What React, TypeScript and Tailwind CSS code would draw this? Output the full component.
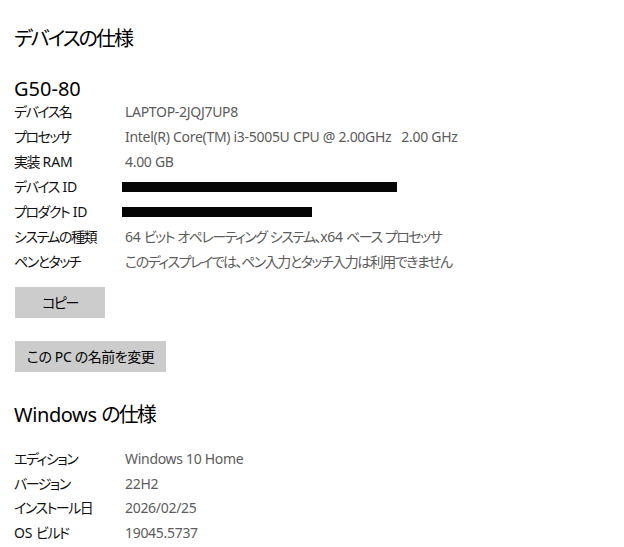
import React from "react";

type Row = { label: string; value?: string; redact?: number };

const deviceRows: Row[] = [
  { label: "デバイス名", value: "LAPTOP-2JQJ7UP8" },
  { label: "プロセッサ", value: "Intel(R) Core(TM) i3-5005U CPU @ 2.00GHz\u00a0\u00a0 2.00 GHz" },
  { label: "実装 RAM", value: "4.00 GB" },
  { label: "デバイス ID", redact: 275 },
  { label: "プロダクト ID", redact: 190 },
  { label: "システムの種類", value: "64 ビット オペレーティング システム、x64 ベース プロセッサ" },
  { label: "ペンとタッチ", value: "このディスプレイでは、ペン入力とタッチ入力は利用できません" },
];

const windowsRows: Row[] = [
  { label: "エディション", value: "Windows 10 Home" },
  { label: "バージョン", value: "22H2" },
  { label: "インストール日", value: "2026/02/25" },
  { label: "OS ビルド", value: "19045.5737" },
];

const CJK = /([\u3000-\u30ff\u4e00-\u9fff\uff00-\uffef]+)/;

// Japanese runs are set tighter than Latin runs, like a UI font with narrow kana.
function Mixed({ text, cjk, latin }: { text: string; cjk: string; latin: string }) {
  return (
    <>
      {text.split(CJK).map((part, i) =>
        part === "" ? null : (
          <span key={i} className={CJK.test(part) ? cjk : latin}>
            {part}
          </span>
        )
      )}
    </>
  );
}

function SpecRow({ row, h }: { row: Row; h: string }) {
  return (
    <div className={`flex items-center ${h}`}>
      <div className="w-[111px] shrink-0 text-[14px] text-[#111] whitespace-pre">
        <Mixed text={row.label} cjk="tracking-[-1.5px]" latin="tracking-[-0.1px]" />
      </div>
      {row.redact ? (
        <div className="-ml-[3px] h-[10px] bg-[#050505]" style={{ width: row.redact }} />
      ) : (
        <div className="text-[14px] text-[#5c5c5c] whitespace-pre">
          <Mixed text={row.value ?? ""} cjk="tracking-[-1.5px]" latin="tracking-[-0.3px]" />
        </div>
      )}
    </div>
  );
}

function Heading({ text, className }: { text: string; className: string }) {
  return (
    <h2 className={`h-[28px] leading-[28px] text-[20px] font-normal whitespace-pre ${className}`}>
      <Mixed text={text} cjk="tracking-[-2px]" latin="tracking-[-0.4px]" />
    </h2>
  );
}

export default function App() {
  return (
    <div
      className="w-[624px] h-[547px] bg-white pl-[14px] overflow-hidden [font-feature-settings:'palt'] text-black"
      style={{ fontFamily: '"Noto Sans", "Noto Sans CJK JP", sans-serif' }}
    >
      <Heading text="デバイスの仕様" className="mt-[25px]" />
      <h2 className="mt-[25px] h-[21px] leading-[21px] text-[20px] font-normal">G50-80</h2>
      <div className="flex flex-col">
        {deviceRows.map((r) => (
          <SpecRow key={r.label} row={r} h="h-[25px]" />
        ))}
      </div>
      <button className="mt-[13px] ml-[1px] block w-[90px] h-[31px] bg-[#cccccc] text-[14px] text-black">
        <Mixed text="コピー" cjk="tracking-[-1.5px]" latin="" />
      </button>
      <button className="mt-[23px] ml-[1px] block w-[151px] h-[31px] bg-[#cccccc] text-[14px] text-black whitespace-pre">
        <Mixed text="この PC の名前を変更" cjk="tracking-[-0.5px]" latin="tracking-[-0.3px]" />
      </button>
      <Heading text="Windows の仕様" className="mt-[29px]" />
      <div className="mt-[17px] flex flex-col">
        {windowsRows.map((r) => (
          <SpecRow key={r.label} row={r} h="h-[24.7px]" />
        ))}
      </div>
    </div>
  );
}
